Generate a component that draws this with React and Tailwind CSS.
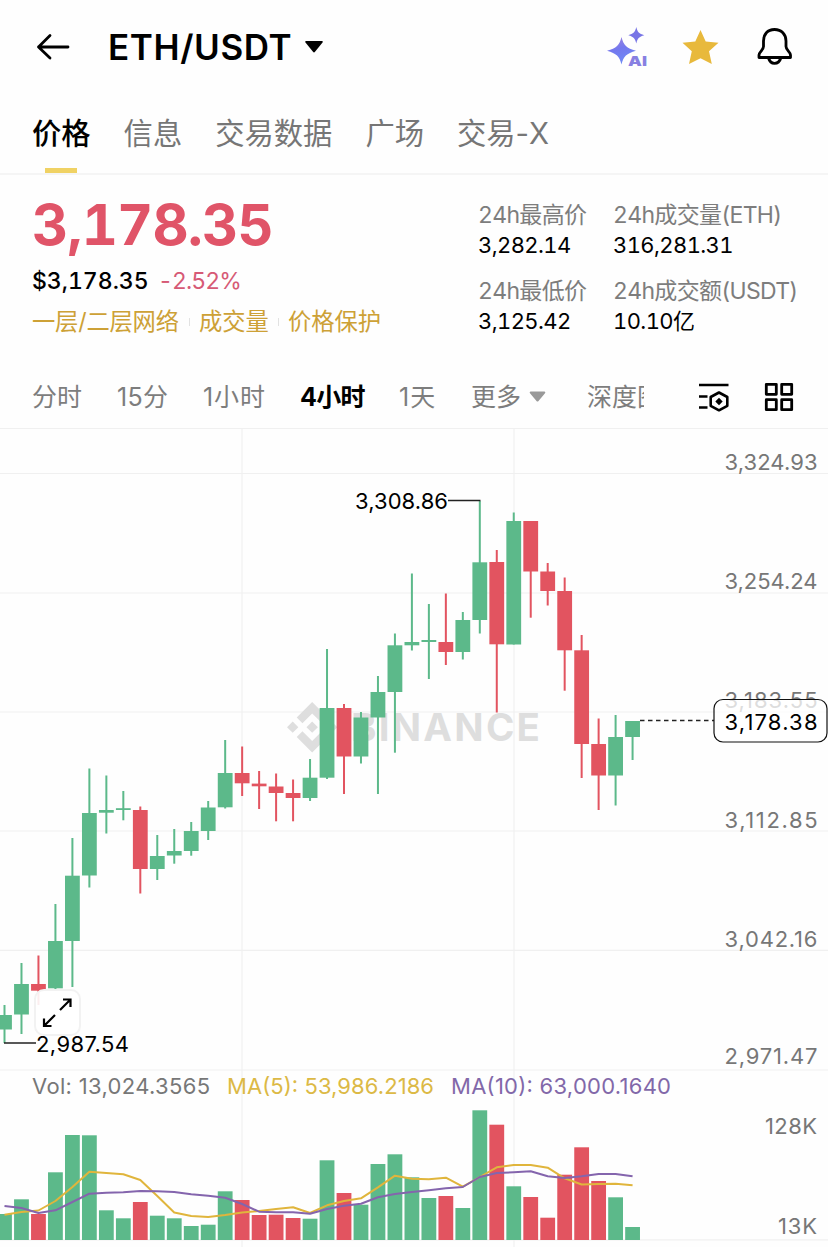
import React from 'react'

const UP = '#5cb98a'
const DOWN = '#e25460'
const STEP = 16.975

// [direction, high, bodyTop, bodyBottom, low, volumeTop, ma5, ma10]
const candles = [
  ['up', 1005, 1015, 1029.5, 1043, 1214, 1214.7, 1206],
  ['up', 963, 984, 1014.5, 1034, 1199.3, 1212, 1208],
  ['down', 955.5, 984, 990.7, 1005, 1214, 1210.5, 1213],
  ['up', 904, 941, 988.3, 990, 1172.3, 1201, 1210.3],
  ['up', 838, 875.7, 941, 987, 1135, 1187, 1202],
  ['up', 768.5, 813, 875.5, 887.5, 1135.3, 1171.7, 1193.7],
  ['up', 775.5, 810, 812.7, 833.5, 1210.3, 1173, 1192.7],
  ['up', 791, 808.2, 810, 820.3, 1218.3, 1174.3, 1192.3],
  ['down', 806.5, 810, 869, 893.5, 1202, 1180, 1191],
  ['up', 835, 856, 869, 880, 1215.7, 1196, 1191.3],
  ['up', 829, 851, 855.5, 863.7, 1218.3, 1212.5, 1192],
  ['up', 822, 831, 851, 855.7, 1226, 1216, 1194.3],
  ['up', 801, 807.5, 831, 840, 1224.7, 1217, 1195.7],
  ['up', 740, 773, 807.3, 808.5, 1191.3, 1215, 1197.7],
  ['down', 746.5, 773, 783.3, 796, 1200, 1212.5, 1204],
  ['down', 771, 783.6, 786.3, 809, 1215, 1211, 1211.7],
  ['down', 773.5, 786.5, 793, 821.3, 1214.7, 1209, 1212.3],
  ['down', 779.5, 793, 798, 821.3, 1218, 1207.3, 1212.3],
  ['up', 759, 777.7, 798, 801, 1218.7, 1213, 1213.7],
  ['up', 649, 708, 777.7, 779, 1160.3, 1205.3, 1209],
  ['down', 704, 708, 756.5, 794, 1193, 1201, 1205.7],
  ['up', 712, 717.5, 756.5, 763.5, 1204.7, 1198.3, 1203.7],
  ['up', 676, 692, 717.5, 794, 1164, 1187.3, 1197.3],
  ['up', 633.5, 645.3, 692, 752.7, 1154.3, 1175.7, 1194],
  ['up', 573.5, 642, 645.3, 650.5, 1177.3, 1178.7, 1192],
  ['up', 604, 640, 642, 679, 1198, 1179.3, 1190.3],
  ['down', 593.5, 642, 652, 665, 1196, 1177.7, 1188.3],
  ['up', 612, 620, 652, 659.5, 1208, 1186.7, 1187],
  ['up', 501, 562.3, 620, 633.5, 1110.3, 1177, 1177],
  ['down', 550, 562, 644.3, 712.5, 1124.7, 1167.3, 1173],
  ['up', 512.5, 521, 644.5, 644.5, 1186.3, 1165, 1172.3],
  ['down', 521, 521, 571.5, 617.7, 1197, 1165, 1171.3],
  ['down', 563, 571.5, 591, 605.5, 1217.7, 1167.7, 1176.3],
  ['down', 577.5, 591, 650.3, 690.7, 1174.7, 1178.3, 1178],
  ['down', 635, 650.3, 744, 778, 1147.3, 1184.5, 1176.3],
  ['down', 718.5, 744, 775.5, 810, 1181, 1184, 1174],
  ['up', 715, 737, 775.5, 805.5, 1197.3, 1183.7, 1174],
  ['up', 721, 721, 737, 760, 1227, 1185.3, 1176.3],
]

const tabs = [
  { label: '价格', active: true },
  { label: '信息' },
  { label: '交易数据' },
  { label: '广场' },
  { label: '交易-X' },
]

const stats = [
  { label: '24h最高价', value: '3,282.14' },
  { label: '24h成交量(ETH)', value: '316,281.31' },
  { label: '24h最低价', value: '3,125.42' },
  { label: '24h成交额(USDT)', value: '10.10亿' },
]

const axis = [
  ['3,324.93', 469.5],
  ['3,254.24', 589],
  ['3,183.55', 708],
  ['3,112.85', 827.5],
  ['3,042.16', 946.5],
  ['2,971.47', 1064],
]

const x = (i) => 4.5 + i * STEP
const points = (col) => candles.map((c, i) => `${x(i)},${c[col]}`).join(' ')

function AiIcon() {
  return (
    <svg width="42" height="42" viewBox="606 26 42 42">
      <defs>
        <linearGradient id="ai" x1="0" y1="0" x2="0.3" y2="1">
          <stop offset="0" stopColor="#a385dc" />
          <stop offset="0.5" stopColor="#7478ee" />
          <stop offset="1" stopColor="#6f8af5" />
        </linearGradient>
      </defs>
      <path
        d="M621.5 37C623.5 45 626.5 48.500 636 50.800C626.500 53.500 623.500 56.500 621.500 64.500C619.500 56.500 616.500 53.500 607 50.800C616.500 48.500 619.500 45 621.500 37Z"
        fill="url(#ai)"
      />
      <path
        d="M636.300 27C637.500 32 639 33.700 644.300 35.200C639 36.700 637.500 38.500 636.300 43.500C635.100 38.500 633.500 36.700 628.300 35.200C633.500 33.700 635.100 32 636.300 27Z"
        fill="#7875e6"
      />
      <text x="628" y="66" fontSize="13.500" fontWeight="900" textLength="19" lengthAdjust="spacingAndGlyphs" fill="#8880e2" fontFamily="Inter, sans-serif">
        AI
      </text>
    </svg>
  )
}

function Header() {
  return (
    <header className="h-[94px] flex items-center pl-9 pr-[35px]">
      <svg width="34" height="28" viewBox="36 33 34 28" fill="none" stroke="#000" strokeWidth="2.800" strokeLinecap="round" strokeLinejoin="round">
        <path d="M68 47H38.500M50 35.500L38.500 47L50 58" />
      </svg>
      <h1 className="ml-[38px] w-[185px] text-[35px] leading-10 font-semibold tracking-[0.6px] whitespace-nowrap">ETH/USDT</h1>
      <svg className="ml-[11px]" width="20" height="13" viewBox="0 0 20 13">
        <path d="M2 0H18Q19.500 0 18.500 1.500L11 10.800Q10 12 9 10.800L1.500 1.500Q.5 0 2 0Z" />
      </svg>
      <div className="ml-auto flex items-center">
        <AiIcon />
        <svg className="ml-[34px]" width="38" height="36" viewBox="0 0 38 36">
          <path
            d="M18.500 1L23.700 12.500L36.500 13.700L27 22.300L29.800 35L18.500 29.300L7 35L9.800 22.300L.5 13.700L13.300 12.500Z"
            fill="#e8b93c"
          />
        </svg>
        <svg className="ml-[36px]" width="37" height="40" viewBox="756 27 37 40" fill="none" stroke="#000" strokeWidth="2.800" strokeLinejoin="round">
          <path d="M774.500 29.500C767.500 29.500 763.500 34.500 763.500 41V46.500C763.500 50 759 52 759 55V57.500H790.500V55C790.500 52 786 50 786 46.500V41C786 34.500 781.500 29.500 774.500 29.500Z" />
          <path d="M768.500 58C769.500 61.500 771.500 63.300 774.500 63.300S779.800 61.500 780.800 58" />
        </svg>
      </div>
    </header>
  )
}

function Tabs() {
  return (
    <nav className="h-[81px] flex gap-[33px] px-8 border-b-2 border-[#f5f5f5] text-[29.300px] leading-[80px] text-[#767676] whitespace-nowrap">
      {tabs.map((tab) => (
        <div key={tab.label} className={tab.active ? 'relative text-black font-medium' : 'relative'}>
          {tab.label}
          {tab.active && <span className="absolute left-[13px] top-[74px] h-[5px] w-8 bg-[#f0d264]" />}
        </div>
      ))}
    </nav>
  )
}

function Summary() {
  return (
    <section className="h-[190px] flex px-8 tabular-nums">
      <div className="w-[446px] shrink-0 pt-[21px]">
        <div className="text-[56px] leading-[58px] font-bold tracking-[-0.8px] text-[#e05468] whitespace-nowrap">3,178.35</div>
        <div className="mt-[12px] flex gap-[10px] text-[23px] leading-[30px] whitespace-nowrap">
          <span className="w-[116px] font-medium">$3,178.35</span>
          <span className="tracking-[-0.900px] text-[#d65a76]">-2.52%</span>
        </div>
        <div className="mt-[10px] flex items-center text-[23.300px] leading-[32px] text-[#cda136] whitespace-nowrap">
          <span className="w-[148px] tracking-[-0.2px]">一层/二层网络</span>
          <span className="mx-[9px] h-2 w-px bg-[#e2e2e2]" />
          <span>成交量</span>
          <span className="mx-[9px] h-2 w-px bg-[#e2e2e2]" />
          <span>价格保护</span>
        </div>
      </div>
      <div className="grid grid-cols-[135px_190px] grid-rows-[76px_76px] pt-[25px]">
        {stats.map((s) => (
          <div key={s.label} className="text-[22px] leading-[30px] whitespace-nowrap">
            <div className="text-[23px] tracking-[-0.700px] text-[#7d7d7d]">{s.label}</div>
            <div className="tracking-[-0.600px]">{s.value}</div>
          </div>
        ))}
      </div>
    </section>
  )
}

function Intervals() {
  return (
    <div className="h-[63px] flex items-center pl-8 pr-[34px] text-[25px] leading-[36px] text-[#7d7d7d] whitespace-nowrap">
      <span className="w-[85px]">分时</span>
      <span className="w-[86px] tracking-[0.3px]">15分</span>
      <span className="w-[97px] tracking-[0.900px]">1小时</span>
      <span className="w-[99px] font-bold tracking-[-0.7px] text-black">4小时</span>
      <span className="w-[72px] tracking-[1px]">1天</span>
      <span>更多</span>
      <svg className="ml-2" width="17" height="11" viewBox="0 0 17 11">
        <path d="M1.500 .5H15.500Q17 1 16 2.200L9.500 10Q8.500 11 7.500 10L1 2.200Q0 1 1.500 .5Z" fill="#999" />
      </svg>
      <span className="ml-[41px] w-[57px] overflow-hidden">深度图</span>
      <svg className="ml-auto" width="32" height="30" viewBox="698 383 32 30" fill="none" stroke="#000" strokeWidth="2.600">
        <path d="M699 386H728.500M699 397.500H707.500M699 408.500H707.500" />
        <path d="M719 393.500L727.300 398V406.800L719 411.300L710.700 406.800V398Z" strokeLinejoin="round" />
        <path d="M719 398.800L722.700 402.500L719 406.200L715.300 402.500Z" fill="#000" stroke="none" />
      </svg>
      <svg className="ml-[34px]" width="30" height="30" viewBox="764 382 30 30" fill="none" stroke="#000" strokeWidth="2.800" strokeLinejoin="round">
        <rect x="766.300" y="384.300" width="10" height="10" />
        <rect x="781.700" y="384.300" width="10" height="10" />
        <rect x="766.300" y="399.700" width="10" height="10" />
        <rect x="781.700" y="399.700" width="10" height="10" />
      </svg>
    </div>
  )
}

function Chart() {
  return (
    <div className="relative h-[819px]">
      <svg className="block" width="828" height="819" viewBox="0 428 828 819" fontFamily="Inter, sans-serif" fontSize="22">
        {/* grid */}
        <g stroke="#f0f0f0" strokeWidth="1.200">
          {[428.5, 473.5, 593, 712, 831, 950.3, 1070, 1239.8].map((y) => (
            <line key={y} x1="0" x2="828" y1={y} y2={y} />
          ))}
          <line x1="242" x2="242" y1="428" y2="1247" />
          <line x1="514" x2="514" y1="428" y2="1247" />
        </g>

        {/* watermark */}
        <g fill="#dedede">
          <path
            transform="translate(287 702) scale(2.100)"
            d="M16.624 13.920l2.717 2.716-7.353 7.353-7.353-7.353 2.717-2.716 4.636 4.660 4.636-4.660zm4.637-4.636L24 12l-2.715 2.716L18.568 12l2.693-2.716zm-9.273 0l2.717 2.692-2.717 2.717L9.272 12l2.716-2.716zm-9.272 0L5.409 12l-2.692 2.692L0 12l2.716-2.716zM11.988.012l7.353 7.329-2.717 2.715-4.636-4.636-4.636 4.660-2.717-2.716 7.353-7.352z"
          />
          <text x="351" y="741" fontSize="38.500" fontWeight="700" textLength="189">BINANCE</text>
        </g>

        {/* candles and volume */}
        {candles.map(([dir, high, top, bottom, low, vol], i) => (
          <g key={i} fill={dir === 'up' ? UP : DOWN}>
            <rect x={x(i) - 1} y={high} width="2" height={low - high} />
            <rect x={x(i) - 7.4} y={top} width="14.800" height={bottom - top} />
            <rect x={x(i) - 7.4} y={vol} width="14.800" height={1240 - vol} />
          </g>
        ))}
        <g fill="none" strokeWidth="2" strokeLinejoin="round">
          <polyline points={points(6)} stroke="#e0b53c" />
          <polyline points={points(7)} stroke="#8465ad" />
        </g>

        {/* high and low markers */}
        <path d="M448 500.500H480.500M4 1043H36" stroke="#222" strokeWidth="1.500" />
        <text x="355" y="508.500" textLength="93">3,308.86</text>
        <text x="36" y="1051.500" textLength="93">2,987.54</text>

        {/* price axis */}
        <g fill="#777">
          {axis.map(([label, y]) => (
            <text key={label} x="724.500" y={y} textLength="93">{label}</text>
          ))}
          <text x="765" y="1133.500" textLength="52">128K</text>
          <text x="778" y="1233.500" textLength="39">13K</text>
          <text x="32" y="1093.500" textLength="178">Vol: 13,024.3565</text>
        </g>
        <text x="227" y="1093.500" textLength="207" fill="#dcb945">MA(5): 53,986.2186</text>
        <text x="451" y="1093.500" textLength="220" fill="#8268a9">MA(10): 63,000.1640</text>

        {/* last price */}
        <line x1="640" x2="714" y1="720.500" y2="720.500" stroke="#222" strokeWidth="1.500" strokeDasharray="4.500 3.500" />
        <rect x="714" y="699.500" width="113" height="42.500" rx="9" fill="#fff" fillOpacity="0.750" stroke="#111" strokeWidth="1.200" />
        <text x="724.500" y="729.500" textLength="93">3,178.38</text>
      </svg>

      <button className="absolute left-[34px] top-[561px] h-[47px] w-[47px] rounded-[10px] border-2 border-[#f2f2f2] bg-white/90 grid place-items-center">
        <svg width="32" height="32" viewBox="42 997 32 32" fill="none" stroke="#000" strokeWidth="2.200">
          <path d="M60 1010L70.500 999.500M63 999.500H70.500V1007M55 1015L44 1026M44 1018.500V1026H51.500" />
        </svg>
      </button>
    </div>
  )
}

function App() {
  return (
    <div className="w-[828px] h-[1247px] overflow-hidden bg-[#fefefe] text-black font-[Inter,'Noto_Sans_CJK_SC',sans-serif]">
      <Header />
      <Tabs />
      <Summary />
      <Intervals />
      <Chart />
    </div>
  )
}

export default App
